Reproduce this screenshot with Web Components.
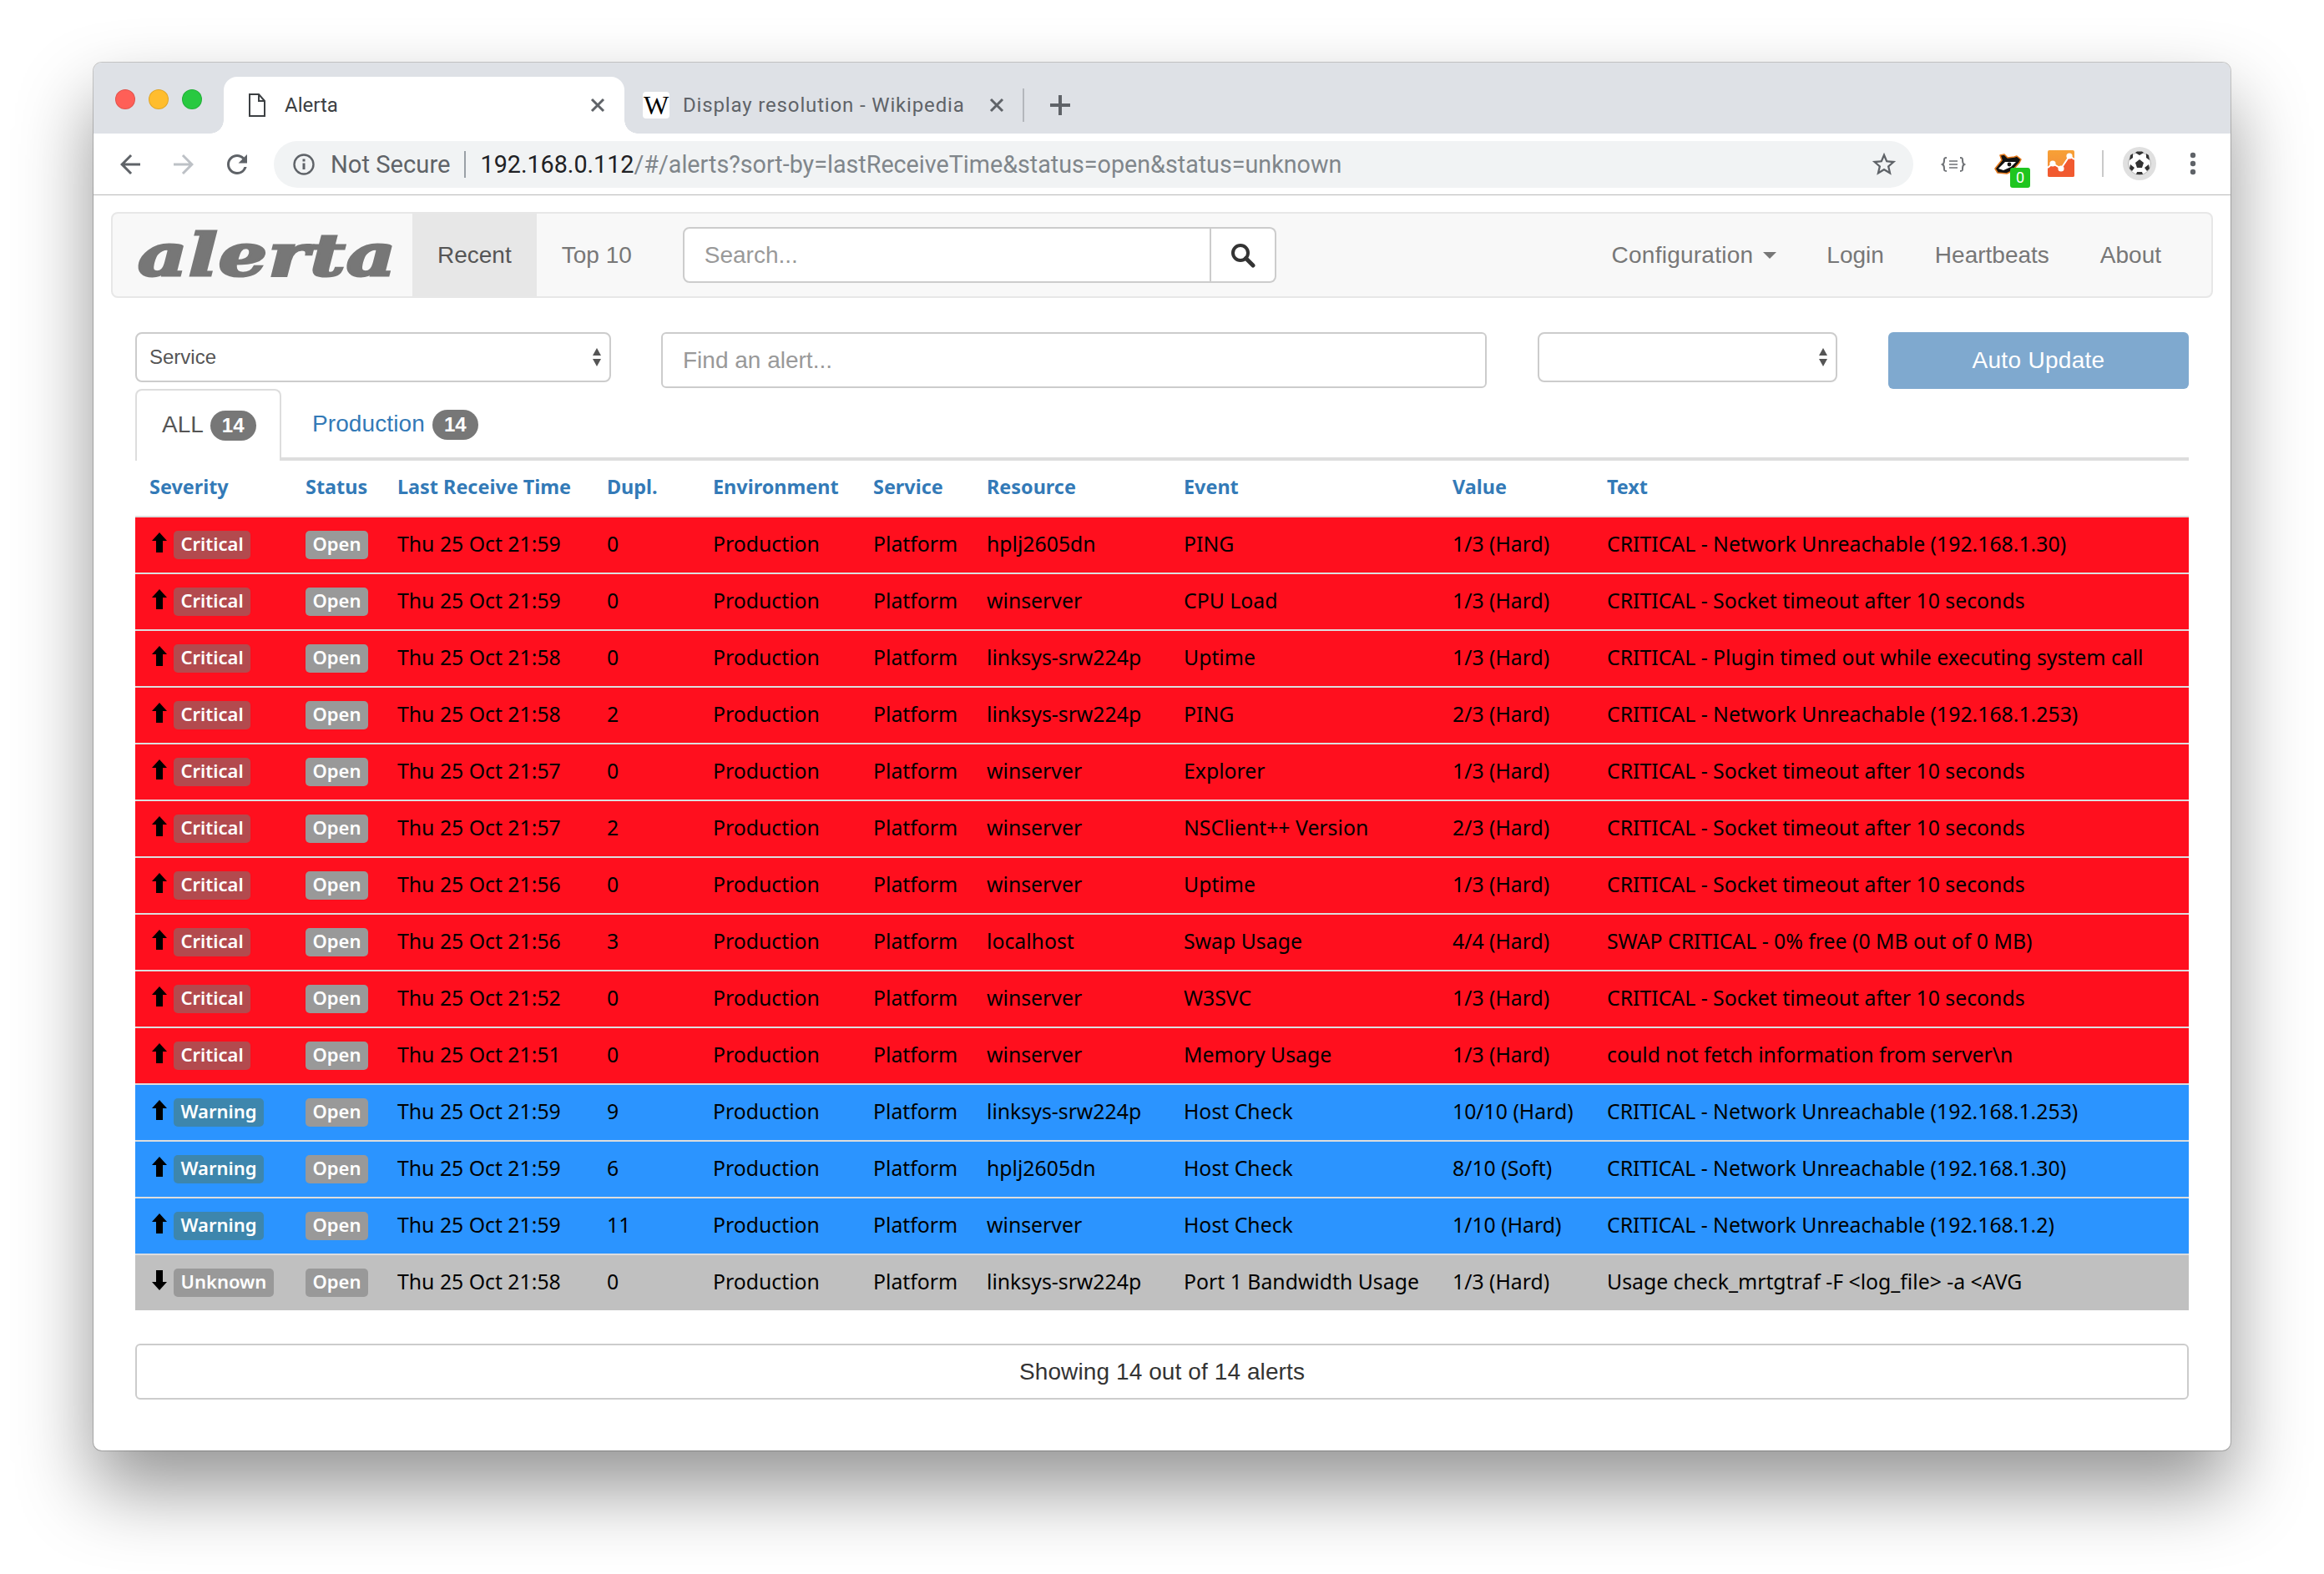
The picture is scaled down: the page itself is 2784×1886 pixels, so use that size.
<!DOCTYPE html>
<html>
<head>
<meta charset="utf-8">
<title>Alerta</title>
<style>
  html, body { margin: 0; padding: 0; background: #fff; }
  body { box-sizing: border-box; height: 1886px; padding: 75px 112px 0; font-family: "Liberation Sans", Arial, sans-serif; overflow: hidden; }
</style>
</head>
<body>
<browser-window>
  <browser-toolbar></browser-toolbar>
  <alerta-nav></alerta-nav>
  <alert-filters></alert-filters>
  <env-tabs></env-tabs>
  <alert-table></alert-table>
  <alert-footer>Showing 14 out of 14 alerts</alert-footer>
</browser-window>

<script>
class BrowserWindow extends HTMLElement {
  constructor() {
    super();
    this.root = this.attachShadow({ mode: "open" });
    this.root.innerHTML = `
      <style>
        :host {
          display: block;
          width: 2560px;
          height: 1663px;
          background: #fff;
          border-radius: 10px;
          box-shadow: 0 0 0 1px rgba(0,0,0,0.2), 0 46px 90px rgba(0,0,0,0.42);
          overflow: hidden;
        }
      </style>
      <slot></slot>
    `;
  }
}

class BrowserToolbar extends HTMLElement {
  constructor() {
    super();
    this.root = this.attachShadow({ mode: "open" });
    this.root.innerHTML = `
      <style>
        :host { display: block; font-family: Roboto, "Liberation Sans", sans-serif; border-bottom: 1px solid #b9b9b9; }
        .strip {
          height: 85px;
          box-sizing: border-box;
          padding-top: 17px;
          background: #dee1e6;
          display: flex;
          align-items: stretch;
        }
        .lights { width: 156px; box-sizing: border-box; padding: 15px 0 0 26px; display: flex; gap: 16px; }
        .lights i { width: 24px; height: 24px; border-radius: 50%; box-sizing: border-box; border: 1px solid rgba(0,0,0,.12); }
        .tab {
          position: relative;
          display: flex;
          align-items: center;
          box-sizing: border-box;
          height: 68px;
          font-size: 24px;
          color: #5f6368;
        }
        .active { width: 480px; background: #fff; border-radius: 16px 16px 0 0; padding-left: 30px; color: #3c4043; }
        .active::before, .active::after {
          content: "";
          position: absolute;
          bottom: 0;
          width: 16px;
          height: 16px;
        }
        .active::before { left: -16px; background: radial-gradient(circle at 0 0, #dee1e6 15.5px, #fff 16px); }
        .active::after { right: -16px; background: radial-gradient(circle at 100% 0, #dee1e6 15.5px, #fff 16px); }
        .active .label { margin-left: 23px; flex: 1; }
        .other { width: 477px; padding-left: 22px; }
        .other .label { margin-left: 16px; flex: 1; white-space: nowrap; letter-spacing: .85px; }
        .favicon {
          width: 32px; height: 32px; background: #fff; border-radius: 4px; color: #000;
          font: 32px/32px "Liberation Serif", serif; text-align: center;
        }
        .x { width: 18px; height: 18px; margin-right: 23px; }
        .other .x { margin-right: 22px; }
        .sep { width: 2px; height: 40px; background: #b4b7bc; align-self: center; }
        .plus { width: 26px; height: 26px; margin: 21px 0 0 30px; }
        .bar {
          height: 73px;
          box-sizing: border-box;
          display: flex;
          align-items: center;
          background: #fff;
        }
        .nav { width: 36px; height: 36px; flex: none; }
        .nav.n2, .nav.n3 { margin-left: 28px; }
        .omni {
          width: 1966px;
          height: 56px;
          margin-left: 26px;
          margin-top: 1px;
          border-radius: 28px;
          background: #f1f3f4;
          display: flex;
          align-items: center;
          box-sizing: border-box;
          padding-left: 23px;
          font-size: 28.7px;
          white-space: nowrap;
          color: #80868b;
        }
        .omni .nots { color: #5f6368; font-size: 29.2px; margin-left: 19px; }
        .omni .div { width: 2px; height: 32px; background: #9aa0a6; margin: 0 18px 0 16px; }
        .omni .host { color: #202124; }
        .omni .star { margin-left: auto; margin-right: 18px; width: 34px; height: 34px; }
        .ext { flex: none; margin-top: 1px; position: relative; height: 56px; }
        .ext svg { display: block; }
        .count {
          position: absolute; left: 116px; top: 32px;
          width: 24px; height: 24px; border-radius: 3px; background: #1fc51f; color: #fff;
          font-size: 18px; line-height: 24px; text-align: center;
        }
      </style>
      <div class="strip">
        <div class="lights">
          <i style="background:#ff5f57"></i><i style="background:#ffbd2e"></i><i style="background:#28c940"></i>
        </div>
        <div class="tab active">
          <svg width="20" height="28" viewBox="0 0 20 28" fill="none" stroke="#3c4043" stroke-width="2"><path d="M1 1h11l7 8v18H1zM12 1v8h7"/></svg>
          <span class="label">Alerta</span>
          <svg class="x" viewBox="0 0 18 18" stroke="#5f6368" stroke-width="3"><path d="M2 2l14 14M16 2L2 16"/></svg>
        </div>
        <div class="tab other">
          <span class="favicon">W</span>
          <span class="label">Display resolution - Wikipedia</span>
          <svg class="x" viewBox="0 0 18 18" stroke="#5f6368" stroke-width="3"><path d="M2 2l14 14M16 2L2 16"/></svg>
        </div>
        <span class="sep"></span>
        <svg class="plus" viewBox="0 0 26 26" stroke="#5f6368" stroke-width="4"><path d="M13 1v24M1 13h24"/></svg>
      </div>
      <div class="bar">
        <svg class="nav" style="margin-left:26px" viewBox="0 0 24 24" fill="#5f6368"><path d="M20 11H7.83l5.59-5.59L12 4l-8 8 8 8 1.41-1.41L7.83 13H20v-2z"/></svg>
        <svg class="nav n2" viewBox="0 0 24 24" fill="#bdc1c6"><path d="M12 4l-1.41 1.41L16.17 11H4v2h12.17l-5.58 5.59L12 20l8-8z"/></svg>
        <svg class="nav n3" viewBox="0 0 24 24" fill="#5f6368"><path d="M17.65 6.35A7.958 7.958 0 0 0 12 4c-4.42 0-7.99 3.58-7.99 8s3.57 8 7.99 8c3.73 0 6.84-2.55 7.73-6h-2.08A5.99 5.99 0 0 1 12 18c-3.31 0-6-2.69-6-6s2.69-6 6-6c1.66 0 3.14.69 4.22 1.78L13 11h7V4l-2.35 2.35z"/></svg>
        <div class="omni">
          <svg width="26" height="26" viewBox="0 0 26 26" fill="none" stroke="#5f6368" stroke-width="2.4"><circle cx="13" cy="13" r="11.5"/><path d="M13 11.5v7.5" stroke-width="3"/><path d="M13 6.5v3" stroke-width="3"/></svg>
          <span class="nots">Not Secure</span><span class="div"></span><span class="host">192.168.0.112</span><span>/#/alerts?sort-by=lastReceiveTime&amp;status=open&amp;status=unknown</span>
          <svg class="star" viewBox="0 0 24 24" fill="#5f6368"><path d="M22 9.24l-7.19-.62L12 2 9.19 8.63 2 9.24l5.46 4.73L5.82 21 12 17.27 18.18 21l-1.63-7.03L22 9.24zM12 15.4l-3.76 2.27 1-4.28-3.32-2.88 4.38-.38L12 6.1l1.71 4.04 4.38.38-3.32 2.88 1 4.28L12 15.4z"/></svg>
        </div>
        <div class="ext">
          <svg width="380" height="56" viewBox="0 0 380 56">
            <g fill="none" stroke="#6f7276" stroke-width="2">
              <path d="M40 20c-3 0-3 1-3 3s0 4-2 5c2 1 2 3 2 5s0 3 3 3M56 20c3 0 3 1 3 3s0 4 2 5c-2 1-2 3-2 5s0 3-3 3"/>
              <path d="M43 24h10M43 28h10M43 32h10" stroke-width="1.6"/>
            </g>
            <path d="M98 33l8-10-2-6 5-1 4 4 8-1 3-1 5 4-2 4-9 10-6 3-11-1z" fill="#111" stroke="#e2781d" stroke-width="1.6" stroke-linejoin="round"/>
            <path d="M102 33l8-8 13 0-6 6-9 4z" fill="#fff"/>
            <circle cx="115" cy="28" r="2.4" fill="#111"/>
            <defs><linearGradient id="ga" x1="0" y1="0" x2="0" y2="1"><stop offset="0" stop-color="#f7a136"/><stop offset="1" stop-color="#f3883a"/></linearGradient></defs>
            <rect x="161" y="11" width="32" height="32" rx="2" fill="url(#ga)"/>
            <path d="M161 32l6-5 10 6 10-15 6 4v19a2 2 0 0 1-2 2h-28a2 2 0 0 1-2-2z" fill="#f15a30"/>
            <path d="M161 32l6-5 10 6 10-15 6 4" fill="none" stroke="#fff" stroke-width="2"/>
            <circle cx="167" cy="27" r="3.6" fill="#fff"/><circle cx="177" cy="33" r="3.6" fill="#fff"/><circle cx="187" cy="18" r="3.6" fill="#fff"/>
            <rect x="226" y="11" width="2" height="32" fill="#c9c9c9"/>
            <circle cx="271" cy="27" r="20" fill="#e0e0e0"/>
            <circle cx="271" cy="27" r="13.5" fill="#fff" stroke="#b5b5b5"/>
            <path d="M271 22l5 4-2 6h-6l-2-6z" fill="#333"/>
            <path d="M266 14l5 3 5-3-2-1.5h-6zM259 23l4-3 0-5-3 2zM283 23l-4-3 0-5 3 2zM262 36l3-4-5-4-1 5zM280 36l-3-4 5-4 1 5zM267 40h8l-1-3h-6z" fill="#333"/>
            <circle cx="335" cy="17" r="3.2" fill="#5f6368"/><circle cx="335" cy="27" r="3.2" fill="#5f6368"/><circle cx="335" cy="37" r="3.2" fill="#5f6368"/>
          </svg>
          <span class="count">0</span>
        </div>
      </div>
    `;
  }
}

class AlertaNav extends HTMLElement {
  constructor() {
    super();
    this.root = this.attachShadow({ mode: "open" });
    this.root.innerHTML = `
      <style>
        :host {
          display: flex;
          height: 103px;
          box-sizing: border-box;
          margin: 20px 21px 0;
          background: #f8f8f8;
          border: 2px solid #e7e7e7;
          border-radius: 8px;
          font-size: 28px;
          color: #777;
          align-items: stretch;
          white-space: nowrap;
        }
        .logo {
          width: 359px;
          box-sizing: border-box;
          padding-left: 30px;
          display: flex;
          align-items: center;
          font: italic bold 70px "DejaVu Serif", serif;
          color: #777;
        }
        .logo span {
          display: block;
          transform: scaleX(1.31);
          transform-origin: 0 50%;
          -webkit-text-stroke: 3px #777;
          letter-spacing: 1px;
        }
        .item { display: flex; align-items: center; padding: 0 30px; }
        .on { background: #e7e7e7; color: #555; }
        .search { display: flex; align-self: center; height: 67px; margin-left: 31px; }
        .field {
          width: 633px; box-sizing: border-box; background: #fff; border: 2px solid #ccc;
          border-radius: 8px 0 0 8px; padding-left: 24px; color: #999; display: flex; align-items: center;
        }
        .go {
          width: 78px; box-sizing: border-box; background: #fff; border: 2px solid #ccc; border-left: 0;
          border-radius: 0 8px 8px 0; display: flex; align-items: center; justify-content: center;
        }
        .right { margin-left: auto; display: flex; margin-right: 30px; }
        .caret { width: 0; height: 0; margin-left: 12px; border: 8px solid transparent; border-top-color: #777; border-bottom: 0; }
        .cfg { letter-spacing: .25px; padding-right: 30px; }
        .wide { padding-right: 31px; }
      </style>
      <div class="logo"><span>alerta</span></div>
      <div class="item on">Recent</div>
      <div class="item">Top 10</div>
      <div class="search">
        <div class="field">Search...</div>
        <div class="go"><svg width="30" height="30" viewBox="0 0 30 30" fill="none" stroke="#333" stroke-width="4"><circle cx="12" cy="12" r="9"/><path d="M18.5 18.5L27 27" stroke-width="5" stroke-linecap="round"/></svg></div>
      </div>
      <div class="right">
        <div class="item cfg">Configuration<span class="caret"></span></div>
        <div class="item wide">Login</div>
        <div class="item wide">Heartbeats</div>
        <div class="item">About</div>
      </div>
    `;
  }
}

class AlertFilters extends HTMLElement {
  constructor() {
    super();
    this.root = this.attachShadow({ mode: "open" });
    this.root.innerHTML = `
      <style>
        :host {
          display: flex;
          margin: 41px 50px 0;
          height: 68px;
          align-items: flex-start;
          color: #555;
        }
        .select {
          height: 60px; box-sizing: border-box; border: 2px solid #ccc; border-radius: 8px; background: #fff;
          display: flex; align-items: center; justify-content: space-between; padding: 0 9px 0 15px; font-size: 24px;
        }
        .input {
          width: 989px; height: 67px; margin-left: 60px; box-sizing: border-box; border: 2px solid #ccc; border-radius: 6px;
          display: flex; align-items: center; padding-left: 24px; font-size: 28px; color: #999;
        }
        .btn {
          width: 360px; height: 68px; margin-left: auto; background: #7fa9cf; border-radius: 6px; color: #fff;
          font-size: 28px; letter-spacing: .3px; display: flex; align-items: center; justify-content: center;
        }
      </style>
      <div class="select" style="width:570px"><span>Service</span><svg width="12" height="24" viewBox="0 0 12 24" fill="#555"><path d="M6 1l5 9H1zM6 23L1 14h10z"/></svg></div>
      <div class="input">Find an alert...</div>
      <div class="select" style="width:359px;margin-left:61px"><span></span><svg width="12" height="24" viewBox="0 0 12 24" fill="#555"><path d="M6 1l5 9H1zM6 23L1 14h10z"/></svg></div>
      <div class="btn">Auto Update</div>
    `;
  }
}

class EnvTabs extends HTMLElement {
  constructor() {
    super();
    this.root = this.attachShadow({ mode: "open" });
    this.root.innerHTML = `
      <style>
        :host {
          display: flex;
          margin: 0 50px;
          height: 86px;
          box-sizing: border-box;
          border-bottom: 4px solid #ddd;
          font-size: 28px;
          white-space: nowrap;
        }
        .tab { display: flex; align-items: center; box-sizing: border-box; height: 86px; }
        .all {
          width: 175px; padding: 0 0 2px 30px; border: 2px solid #ddd; border-bottom: 0; border-radius: 8px 8px 0 0;
          background: #fff; color: #555; margin-bottom: -4px;
        }
        .prod { padding: 0 0 2px 37px; color: #337ab7; letter-spacing: .1px; }
        .badge {
          margin-left: 8px; height: 36px; padding: 0 14px; border-radius: 18px; background: #777; color: #fff;
          font-weight: bold; font-size: 24px; line-height: 36px; margin-top: 2px;
        }
        .prod .badge { margin-left: 9px; }
      </style>
      <div class="tab all">ALL<span class="badge">14</span></div>
      <div class="tab prod">Production<span class="badge">14</span></div>
    `;
  }
}

const COLS = "187px 110px 251px 127px 192px 136px 236px 322px 185px 1fr";

const ALERTS = [
  ["Critical", "Thu 25 Oct 21:59", "0", "hplj2605dn", "PING", "1/3 (Hard)", "CRITICAL - Network Unreachable (192.168.1.30)"],
  ["Critical", "Thu 25 Oct 21:59", "0", "winserver", "CPU Load", "1/3 (Hard)", "CRITICAL - Socket timeout after 10 seconds"],
  ["Critical", "Thu 25 Oct 21:58", "0", "linksys-srw224p", "Uptime", "1/3 (Hard)", "CRITICAL - Plugin timed out while executing system call"],
  ["Critical", "Thu 25 Oct 21:58", "2", "linksys-srw224p", "PING", "2/3 (Hard)", "CRITICAL - Network Unreachable (192.168.1.253)"],
  ["Critical", "Thu 25 Oct 21:57", "0", "winserver", "Explorer", "1/3 (Hard)", "CRITICAL - Socket timeout after 10 seconds"],
  ["Critical", "Thu 25 Oct 21:57", "2", "winserver", "NSClient++ Version", "2/3 (Hard)", "CRITICAL - Socket timeout after 10 seconds"],
  ["Critical", "Thu 25 Oct 21:56", "0", "winserver", "Uptime", "1/3 (Hard)", "CRITICAL - Socket timeout after 10 seconds"],
  ["Critical", "Thu 25 Oct 21:56", "3", "localhost", "Swap Usage", "4/4 (Hard)", "SWAP CRITICAL - 0% free (0 MB out of 0 MB)"],
  ["Critical", "Thu 25 Oct 21:52", "0", "winserver", "W3SVC", "1/3 (Hard)", "CRITICAL - Socket timeout after 10 seconds"],
  ["Critical", "Thu 25 Oct 21:51", "0", "winserver", "Memory Usage", "1/3 (Hard)", "could not fetch information from server\\n"],
  ["Warning", "Thu 25 Oct 21:59", "9", "linksys-srw224p", "Host Check", "10/10 (Hard)", "CRITICAL - Network Unreachable (192.168.1.253)"],
  ["Warning", "Thu 25 Oct 21:59", "6", "hplj2605dn", "Host Check", "8/10 (Soft)", "CRITICAL - Network Unreachable (192.168.1.30)"],
  ["Warning", "Thu 25 Oct 21:59", "11", "winserver", "Host Check", "1/10 (Hard)", "CRITICAL - Network Unreachable (192.168.1.2)"],
  ["Unknown", "Thu 25 Oct 21:58", "0", "linksys-srw224p", "Port 1 Bandwidth Usage", "1/3 (Hard)", "Usage check_mrtgtraf -F <log_file> -a <AVG"],
];

class AlertRow extends HTMLElement {
  constructor() {
    super();
    this.root = this.attachShadow({ mode: "open" });
    this.root.innerHTML = `
      <style>
        :host {
          display: grid;
          grid-template-columns: ${COLS};
          height: 68px;
          box-sizing: border-box;
          padding-left: 17px;
          align-items: center;
          border-bottom: 2px solid #ddd;
          font: 24.8px "Noto Sans", sans-serif;
          color: #000;
          white-space: nowrap;
        }
        :host([sev="Critical"]) { background: #ff0f1e; --sev: #b34a4e; }
        :host([sev="Warning"]) { background: #2b94ff; --sev: #3d86ad; }
        :host([sev="Unknown"]) { background: #c0c0c0; --sev: #999; height: 66px; border-bottom: 0; }
        div:not(.sev):not(.st) { margin-top: -4px; }
        .sev, .st { display: flex; align-items: center; }
        .sev svg { margin: -6px 8px 0 3px; flex: none; }
        .label {
          display: block; height: 34px; line-height: 31px; padding: 0 8.5px; border-radius: 5px; background: #999;
          color: #fff; font-size: 22px; font-weight: 600; box-sizing: border-box;
        }
        .sev .label { background: var(--sev); }
      </style>
      <div class="sev"><svg width="18" height="24" viewBox="0 0 18 24"><path id="arrow" d="M9 0L0 10h5v14h8V10h5z"/></svg><span class="label" id="sev"></span></div>
      <div class="st"><span class="label">Open</span></div>
      <div id="time"></div>
      <div id="dupl"></div>
      <div>Production</div>
      <div>Platform</div>
      <div id="res"></div>
      <div id="evt"></div>
      <div id="val"></div>
      <div id="txt"></div>
    `;
  }

  connectedCallback() {
    var sev = this.getAttribute("sev");
    this.root.querySelector("#sev").textContent = sev;
    if (sev == "Unknown") {
      this.root.querySelector("#arrow").setAttribute("d", "M9 24L0 14h5V0h8v14h5z");
    }
    ["time", "dupl", "res", "evt", "val", "txt"].forEach((k) => {
      this.root.querySelector("#" + k).textContent = this.getAttribute(k);
    });
  }
}

class AlertTable extends HTMLElement {
  constructor() {
    super();
    this.root = this.attachShadow({ mode: "open" });
    this.root.innerHTML = `
      <style>
        :host { display: block; margin: 0 50px; }
        .head {
          display: grid;
          grid-template-columns: ${COLS};
          height: 68px;
          box-sizing: border-box;
          padding: 0 0 5px 17px;
          align-items: center;
          border-bottom: 2px solid #ddd;
          font: bold 23.4px "Noto Sans", sans-serif;
          color: #337ab7;
          white-space: nowrap;
        }
      </style>
      <div class="head">
        <div>Severity</div><div>Status</div><div>Last Receive Time</div><div>Dupl.</div><div>Environment</div>
        <div>Service</div><div>Resource</div><div>Event</div><div>Value</div><div>Text</div>
      </div>
      <div id="rows"></div>
    `;
  }

  connectedCallback() {
    var rows = this.root.querySelector("#rows");
    ALERTS.forEach((a) => {
      var row = document.createElement("alert-row");
      row.setAttribute("sev", a[0]);
      row.setAttribute("time", a[1]);
      row.setAttribute("dupl", a[2]);
      row.setAttribute("res", a[3]);
      row.setAttribute("evt", a[4]);
      row.setAttribute("val", a[5]);
      row.setAttribute("txt", a[6]);
      rows.appendChild(row);
    });
  }
}

class AlertFooter extends HTMLElement {
  constructor() {
    super();
    this.root = this.attachShadow({ mode: "open" });
    this.root.innerHTML = `
      <style>
        :host {
          display: flex;
          align-items: center;
          justify-content: center;
          margin: 40px 50px 0;
          height: 67px;
          box-sizing: border-box;
          border: 2px solid #ccc;
          border-radius: 6px;
          padding-top: 1px;
          font-size: 28px;
          letter-spacing: .1px;
          color: #333;
        }
      </style>
      <slot></slot>
    `;
  }
}

customElements.define("browser-window", BrowserWindow);
customElements.define("browser-toolbar", BrowserToolbar);
customElements.define("alerta-nav", AlertaNav);
customElements.define("alert-filters", AlertFilters);
customElements.define("env-tabs", EnvTabs);
customElements.define("alert-row", AlertRow);
customElements.define("alert-table", AlertTable);
customElements.define("alert-footer", AlertFooter);
</script>
</body>
</html>
